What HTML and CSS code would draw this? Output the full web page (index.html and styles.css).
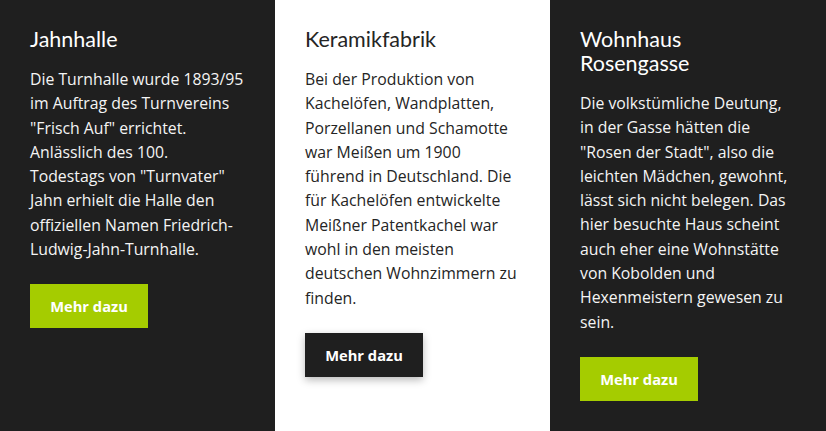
FILE: index.html
```html
<!DOCTYPE html>
<html lang="de">
<head>
<meta charset="utf-8">
<title>Sehenswürdigkeiten</title>
<link rel="stylesheet" href="styles.css">
</head>
<body>
<main class="cards">
  <section class="card card--dark">
    <h2 class="card__title">Jahnhalle</h2>
    <p class="card__text">Die Turnhalle wurde 1893/95 im Auftrag des Turnvereins "Frisch Auf" errichtet. Anlässlich des 100. Todestags von "Turnvater" Jahn erhielt die Halle den offiziellen Namen Friedrich-Ludwig-Jahn-Turnhalle.</p>
    <a class="btn btn--green" href="#">Mehr dazu</a>
  </section>
  <section class="card card--light">
    <h2 class="card__title">Keramikfabrik</h2>
    <p class="card__text">Bei der Produktion von Kachelöfen, Wandplatten, Porzellanen und Schamotte war Meißen um 1900 führend in Deutschland. Die für Kachelöfen entwickelte Meißner Patentkachel war wohl in den meisten deutschen Wohnzimmern zu finden.</p>
    <a class="btn btn--dark" href="#">Mehr dazu</a>
  </section>
  <section class="card card--dark">
    <h2 class="card__title">Wohnhaus Rosengasse</h2>
    <p class="card__text">Die volkstümliche Deutung, in der Gasse hätten die "Rosen der Stadt", also die leichten Mädchen, gewohnt, lässt sich nicht belegen. Das hier besuchte Haus scheint auch eher eine Wohnstätte von Kobolden und Hexenmeistern gewesen zu sein.</p>
    <a class="btn btn--green" href="#">Mehr dazu</a>
  </section>
</main>
</body>
</html>
```
FILE: styles.css
```css
html, body {
  margin: 0;
  padding: 0;
  height: 100%;
}
body {
  font-family: "Open Sans", Lato, sans-serif;
  background: #fff;
}
.cards {
  display: grid;
  grid-template-columns: 275px 275px 276px;
  min-height: 431px;
}
.card {
  padding: 27px 30px 30px 30px;
  display: flex;
  flex-direction: column;
  align-items: flex-start;
}
.card--dark {
  background: #1f1f1f;
  color: #f4f4f4;
}
.card--light {
  background: #fff;
  color: #252525;
}
.card__title {
  margin: 0 0 16px 0;
  font-family: Lato, "Open Sans", sans-serif;
  font-size: 21.5px;
  line-height: 24px;
  font-weight: 400;
}
.card--dark .card__title {
  color: #fff;
}
.card__text {
  margin: 0 0 23px 0;
  font-size: 15.8px;
  line-height: 24.3px;
}
.btn {
  display: inline-block;
  width: 118px;
  box-sizing: border-box;
  text-align: center;
  height: 44px;
  line-height: 44px;
  font-size: 14.7px;
  font-weight: 700;
  text-decoration: none;
  color: #fff;
}
.btn--green {
  background: #a5cc00;
}
.btn--dark {
  background: #1f1f1f;
  box-shadow: 0 3px 8px rgba(0, 0, 0, 0.28);
}
```
